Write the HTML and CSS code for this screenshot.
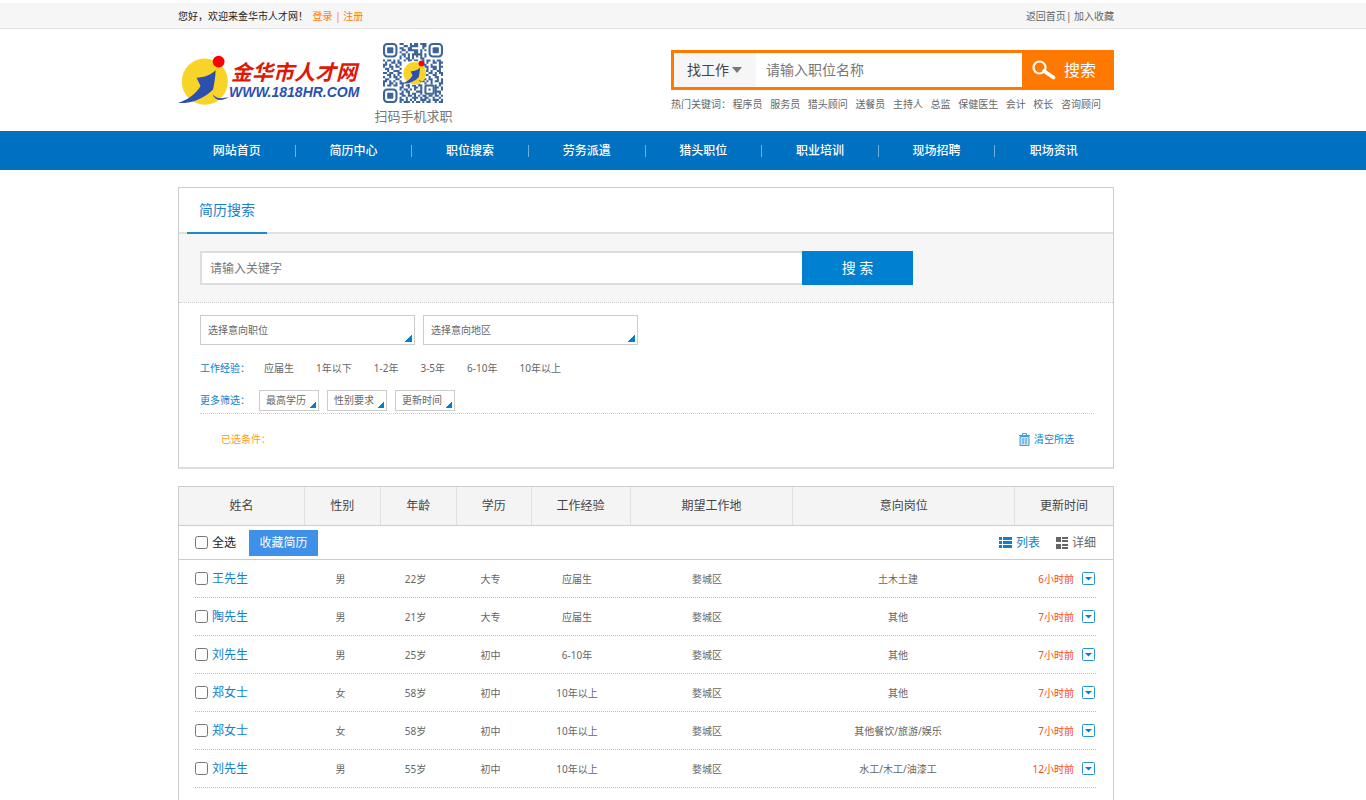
FILE: index.html
```html
<!DOCTYPE html>
<html lang="zh-CN">
<head>
<meta charset="utf-8">
<title>金华市人才网</title>
<link rel="stylesheet" href="styles.css">
</head>
<body>
<svg class="defs" aria-hidden="true">
  <symbol id="mark" viewBox="24 160 154 158">
    <circle cx="105" cy="244" r="70" fill="#f8d428"/>
    <path d="M24 308C50 300 76 284 92 257L80 232C104 231 124 222 138 209C137 232 134 248 130 268C120 278 112 284 104 288C80 302 54 311 24 308Z" fill="#2d50b0"/>
    <path d="M129 283C138 294 152 298 178 291C160 304 136 303 129 283Z" fill="#2d50b0"/>
    <circle cx="147" cy="183" r="18" fill="#f00"/>
  </symbol>
  <symbol id="open" viewBox="0 0 13 13">
    <rect x="0.5" y="0.5" width="12" height="12" rx="1" fill="#fff" stroke="#2a93d8"/>
    <path d="M3 5H10L6.500 8.500Z" fill="#0a7fd0"/>
  </symbol>
</svg>

<div class="topbar">
  <div class="wrap topbar-in">
    <div>您好，欢迎来金华市人才网！ <span class="sign"><a href="#">登录</a> | <a href="#">注册</a></span></div>
    <div class="toplinks"><a href="#">返回首页</a>| <a href="#">加入收藏</a></div>
  </div>
</div>

<header class="head">
  <div class="wrap head-in">
    <a class="logo" href="#">
      <svg class="logo-mark" aria-hidden="true"><use href="#mark"/></svg>
      <span class="logo-text"><span class="logo-cn">金华市人才网</span><span class="logo-en">WWW.1818HR.COM</span></span>
    </a>
    <div class="qr">
      <svg class="qr-code" viewBox="0 0 29 29" aria-hidden="true">
        <g fill="none" stroke="#3d6499">
          <rect x="0.5" y="0.5" width="6" height="6" rx="1.500"/>
          <rect x="22.5" y="0.5" width="6" height="6" rx="1.500"/>
          <rect x="0.5" y="22.5" width="6" height="6" rx="1.500"/>
          <rect x="20.5" y="20.5" width="4" height="4" rx="0.500"/>
          <path id="qr-bits" d=""/>
        </g>
        <g fill="#3d6499">
          <rect x="2" y="2" width="3" height="3" rx="0.500"/>
          <rect x="24" y="2" width="3" height="3" rx="0.500"/>
          <rect x="2" y="24" width="3" height="3" rx="0.500"/>
          <rect x="22" y="22" width="1" height="1"/>
        </g>
        <circle cx="15" cy="14.500" r="5.800" fill="#fff"/>
        <use href="#mark" x="9" y="8" width="12" height="12.500"/>
      </svg>
      <span class="qr-label">扫码手机求职</span>
    </div>
    <div class="find">
      <form class="find-bar">
        <span class="find-type"><select aria-label="搜索类型"><option>找工作</option><option>找人才</option></select></span>
        <input type="text" aria-label="职位名称" placeholder="请输入职位名称">
        <button type="button">
          <svg width="24" height="20" viewBox="0 0 24 20" fill="none" stroke="#fff" aria-hidden="true"><circle cx="7.500" cy="7.500" r="6" stroke-width="2.200"/><path d="M12 11L21.500 17.500" stroke-width="3.600" stroke-linecap="round"/></svg>
          搜索
        </button>
      </form>
      <div class="hot">
        <span>热门关键词：</span><a href="#">程序员</a><a href="#">服务员</a><a href="#">猎头顾问</a><a href="#">送餐员</a><a href="#">主持人</a><a href="#">总监</a><a href="#">保健医生</a><a href="#">会计</a><a href="#">校长</a><a href="#">咨询顾问</a>
      </div>
    </div>
  </div>
</header>

<nav class="nav">
  <div class="wrap nav-in">
    <a href="#">网站首页</a><a href="#">简历中心</a><a href="#">职位搜索</a><a href="#">劳务派遣</a><a href="#">猎头职位</a><a href="#">职业培训</a><a href="#">现场招聘</a><a href="#">职场资讯</a>
  </div>
</nav>

<main class="main">
  <div class="wrap main-in">
    <section class="panel">
      <div class="tabs"><a class="tab" href="#">简历搜索</a></div>
      <form class="keyword">
        <input type="text" aria-label="关键字" placeholder="请输入关键字">
        <button type="button">搜 索</button>
      </form>
      <div class="filters">
        <div class="pickers">
          <select class="pick" aria-label="意向职位"><option>选择意向职位</option></select>
          <select class="pick" aria-label="意向地区"><option>选择意向地区</option></select>
        </div>
        <div class="line">
          <span class="line-label">工作经验：</span>
          <div class="years"><a href="#">应届生</a><a href="#">1年以下</a><a href="#">1-2年</a><a href="#">3-5年</a><a href="#">6-10年</a><a href="#">10年以上</a></div>
        </div>
        <div class="line more">
          <span class="line-label">更多筛选：</span>
          <div class="smalls">
            <select class="pick small" aria-label="最高学历"><option>最高学历</option></select>
            <select class="pick small" aria-label="性别要求"><option>性别要求</option></select>
            <select class="pick small" aria-label="更新时间"><option>更新时间</option></select>
          </div>
        </div>
        <div class="chosen">
          <span>已选条件：</span>
          <a href="#"><svg width="11" height="13" viewBox="0 0 11 13" aria-hidden="true"><path d="M0 2.500H11M3.500 2V0.500H7.500V2" fill="none" stroke="#3d9fdc"/><path d="M1 3.500H10V12.500H1Z" fill="#c4e1f4" stroke="#3d9fdc"/><path d="M4 5V11M7 5V11" stroke="#3d9fdc"/></svg>清空所选</a>
        </div>
      </div>
    </section>

    <table class="list">
      <thead>
        <tr><th>姓名</th><th>性别</th><th>年龄</th><th>学历</th><th>工作经验</th><th>期望工作地</th><th>意向岗位</th><th>更新时间</th></tr>
      </thead>
      <tbody class="tools">
        <tr><td colspan="8">
          <div class="tools-in">
            <label><input type="checkbox">全选</label>
            <button type="button">收藏简历</button>
            <a class="view on" href="#"><svg width="13" height="11" viewBox="0 0 13 11" fill="currentColor" aria-hidden="true"><path d="M0 0H3V3H0ZM4 0H13V3H4ZM0 4H3V7H0ZM4 4H13V7H4ZM0 8H3V11H0ZM4 8H13V11H4Z"/></svg>列表</a>
            <a class="view" href="#"><svg width="12" height="12" viewBox="0 0 12 12" fill="currentColor" aria-hidden="true"><path d="M0 0H5V5H0ZM6 0H12V2H6ZM6 3H12V5H6ZM0 7H5V12H0ZM6 7H12V9H6ZM6 10H12V12H6Z"/></svg>详细</a>
          </div>
        </td></tr>
      </tbody>
      <tbody class="rows">
        <tr><td><label><input type="checkbox" aria-label="选择王先生"></label><a href="#">王先生</a></td><td>男</td><td>22岁</td><td>大专</td><td>应届生</td><td>婺城区</td><td>土木土建</td><td class="time">6小时前<button type="button" aria-label="展开"><svg width="13" height="13"><use href="#open"/></svg></button></td></tr>
        <tr><td><label><input type="checkbox" aria-label="选择陶先生"></label><a href="#">陶先生</a></td><td>男</td><td>21岁</td><td>大专</td><td>应届生</td><td>婺城区</td><td>其他</td><td class="time">7小时前<button type="button" aria-label="展开"><svg width="13" height="13"><use href="#open"/></svg></button></td></tr>
        <tr><td><label><input type="checkbox" aria-label="选择刘先生"></label><a href="#">刘先生</a></td><td>男</td><td>25岁</td><td>初中</td><td>6-10年</td><td>婺城区</td><td>其他</td><td class="time">7小时前<button type="button" aria-label="展开"><svg width="13" height="13"><use href="#open"/></svg></button></td></tr>
        <tr><td><label><input type="checkbox" aria-label="选择郑女士"></label><a href="#">郑女士</a></td><td>女</td><td>58岁</td><td>初中</td><td>10年以上</td><td>婺城区</td><td>其他</td><td class="time">7小时前<button type="button" aria-label="展开"><svg width="13" height="13"><use href="#open"/></svg></button></td></tr>
        <tr><td><label><input type="checkbox" aria-label="选择郑女士"></label><a href="#">郑女士</a></td><td>女</td><td>58岁</td><td>初中</td><td>10年以上</td><td>婺城区</td><td>其他餐饮/旅游/娱乐</td><td class="time">7小时前<button type="button" aria-label="展开"><svg width="13" height="13"><use href="#open"/></svg></button></td></tr>
        <tr><td><label><input type="checkbox" aria-label="选择刘先生"></label><a href="#">刘先生</a></td><td>男</td><td>55岁</td><td>初中</td><td>10年以上</td><td>婺城区</td><td>水工/木工/油漆工</td><td class="time">12小时前<button type="button" aria-label="展开"><svg width="13" height="13"><use href="#open"/></svg></button></td></tr>
      </tbody>
    </table>
  </div>
</main>
<script src="qr.js"></script>
</body>
</html>
```

FILE: styles.css
```css
* { box-sizing: border-box; }
body {
  margin: 0;
  background: #fff;
  color: #666;
  font: 10px/16px "Noto Sans", "Noto Sans CJK SC", sans-serif;
}
a { color: inherit; text-decoration: none; }
button, input, select { font: inherit; color: inherit; margin: 0; border: 0; border-radius: 0; padding: 0; }
button, select { cursor: pointer; }
select { appearance: none; }
svg { display: block; flex: none; }
.defs { width: 0; height: 0; position: absolute; }

.topbar, .head, .nav, .main { padding-right: 74px; }
.wrap { max-width: 936px; margin: 0 auto; }

.topbar { margin-top: 3px; background: #f6f6f6; border-bottom: 1px solid #e2e2e2; }
.topbar-in { display: flex; justify-content: space-between; align-items: center; height: 25px; padding-top: 1px; color: #222; }
.sign { color: #ff7d0a; margin-left: 2px; }
.toplinks { color: #666; }

.head-in { display: flex; align-items: flex-start; height: 102px; }
.logo { display: flex; align-items: flex-start; padding-top: 25px; }
.logo-mark { width: 51px; height: 52px; }
.logo-text { display: flex; flex-direction: column; font-weight: 700; font-style: italic; padding-top: 6px; }
.logo-cn { font-size: 21px; line-height: 24px; color: #e01808; padding-left: 2px; }
.logo-en { font: italic 700 14px/16px "Liberation Sans", sans-serif; color: #2d50b0; }
.qr { display: flex; flex-direction: column; align-items: center; gap: 4px; padding: 14px 0 0 15px; }
.qr-code { width: 60px; height: 60px; }
.qr-label { font-size: 13px; line-height: 18px; color: #777; }
.find { flex: 0 1 443px; margin-left: auto; padding-top: 21px; }
.find-bar { display: flex; height: 40px; border: 3px solid #ff7800; background: #fff; }
.find-type { display: flex; align-items: center; width: 82px; background: #f6f6f6; font-size: 14px; color: #444; padding-left: 13px; }
.find-type select { background: none; width: 45px; height: 34px; }
.find-type::after { content: ""; border: 5px solid transparent; border-top: 6px solid #777; border-bottom: 0; }
.find-bar input { flex: 1; min-width: 0; padding: 0 10px; font-size: 14px; }
.find-bar button { display: flex; align-items: center; gap: 8px; width: 89px; padding-left: 10px; background: #ff7800; color: #fff; font-size: 16px; }
input::placeholder { color: #777; opacity: 1; }
.hot { display: flex; justify-content: space-between; padding: 6px 13px 0 0; white-space: nowrap; }
.hot span { margin-right: -6px; }

.nav { background: #0070c0; }
.nav-in { display: flex; padding: 0 2px 0 1px; color: #fff; font-size: 12px; font-weight: 500; }
.nav-in a { flex: 1; display: flex; align-items: center; height: 39px; }
.nav-in a::before { content: ""; flex: 1; }
.nav-in a::after { content: ""; flex: 1; height: 12px; border-right: 1px solid #6cb0e0; }
.nav-in a:last-child::after { border: 0; }

.main-in { display: flex; flex-direction: column; gap: 17px; padding-top: 17px; }
.panel { border: 1px solid #ccc; border-bottom: 2px solid #ddd; }
.tabs { display: flex; height: 46px; padding-left: 8px; border-bottom: 2px solid #e0e0e0; }
.tab { height: 46px; padding: 0 12px; border-bottom: 2px solid #1a88d4; color: #1a80cc; font-size: 14px; line-height: 44px; }
.keyword { display: flex; padding: 17px 200px 17px 21px; background: #f6f6f6; border-bottom: 1px dotted #ccc; }
.keyword input { flex: 1; min-width: 0; height: 34px; padding: 0 8px; border: 2px solid #ddd; border-right: 0; background: #fff; font-size: 12px; }
.keyword button { width: 111px; height: 34px; background: #0080d0; color: #fff; font-size: 14px; }
.filters { padding: 12px 19px 0 21px; }
.pickers { display: flex; gap: 8px; margin-bottom: 12px; }
.pick {
  width: 215px;
  height: 30px;
  padding: 0 7px;
  border: 1px solid #ccc;
  background: linear-gradient(135deg, transparent 48%, #0080d0 50%) no-repeat right 2px bottom 2px / 7px 7px #fff;
}
.pick.small { width: 60px; height: 21px; padding: 0 0 0 6px; background-size: 6px 6px; }
.line { display: flex; align-items: center; height: 21px; }
.line-label { color: #1080cc; width: 59px; }
.years { display: flex; gap: 22px; padding-left: 5px; }
.smalls { display: flex; gap: 8px; }
.more { height: 36px; padding: 12px 0 3px; border-bottom: 1px dotted #ccc; }
.chosen { display: flex; justify-content: space-between; align-items: center; height: 53px; padding: 0 20px 3px 21px; color: #ff9c10; }
.chosen a { display: flex; align-items: center; gap: 4px; color: #1080cc; }

.list { display: block; min-height: 330px; border: 1px solid #ccc; border-bottom: 0; color: #666; }
.list thead, .list tbody { display: block; }
.list thead tr { display: grid; grid-template-columns: 126fr 76fr 76fr 75fr 99fr 163fr 222fr 98fr; background: #f4f4f4; border-bottom: 1px solid #ccc; }
.list th { padding: 0; border-right: 1px solid #e0e0e0; font-size: 12px; font-weight: 400; line-height: 38px; color: #444; }
.list th:last-child { border-right: 0; }
.tools tr, .tools td { display: block; padding: 0; }
.tools-in { display: flex; align-items: center; height: 34px; padding: 0 17px 0 16px; border-bottom: 1px solid #ccc; font-size: 12px; }
.list label { display: flex; align-items: center; gap: 4px; color: #222; }
.list input { width: 13px; height: 13px; }
.tools-in button { width: 69px; height: 26px; margin: 0 auto 0 13px; background: #3e90e8; color: #fff; }
.view { display: flex; align-items: center; gap: 4px; margin-left: 16px; }
.view.on { color: #1080cc; }
.rows { padding: 0 17px 0 16px; }
.rows tr { display: grid; grid-template-columns: 108fr 75fr 75fr 75fr 98fr 162fr 220fr 88fr; height: 38px; border-bottom: 1px dotted #bbb; }
.rows td { display: flex; align-items: center; justify-content: center; padding: 0; }
.rows td:first-child { justify-content: flex-start; gap: 4px; }
.rows a { color: #1080cc; font-size: 12px; }
.rows .time { justify-content: flex-end; gap: 8px; padding-right: 1px; color: #ff4818; white-space: nowrap; }
.time button { background: none; }
```

FILE: qr.js
```js
// One string per module row; "#" marks a dark module outside the finder squares.
const rows = [
  "........##...#.##.###........",
  "..........##.####..##........",
  "........##..##.....#.........",
  ".........##.#####.#.#........",
  "........#..#...##.#..........",
  ".........##.#.#####.#........",
  "........#.#.#.#.#.#.#........",
  "........#..##.#...##.........",
  "#.##.#.#..#.##.##..#.##.#.##.",
  ".#..##.##..........#.#..##.##",
  "##.#..#.#..........##..#...#.",
  "#..##.##............##.###.##",
  ".##.#...#..........#.#..##.#.",
  "..#..###............##.#..##.",
  "##.##..##..........#..##.#.##",
  "..##.#.#............##..##..#",
  "#..#.##.#..........#..#..##..",
  ".##...##...........##.##..#.#",
  "##.#.#..#..........#.#.#.##.#",
  "#..##.#.##..#.#.##..#..#...##",
  "#.##.##..#.##.##.##......#.#.",
  "........##..#..##.#......##.#",
  "........#.##.#.#..#......#..#",
  ".........#.##...###......###.",
  "........##..#.##..#......#.#.",
  ".........##.##.#.#.##.##.##.#",
  "........#..#..###.#.##..#..#.",
  "........##.#.#.#..###.#.###.#",
  "........#.###.#.##.#.##..#.##"
];
let d = "";
rows.forEach((row, y) => {
  [...row].forEach((c, x) => { if (c === "#") d += `M${x} ${y + 0.5}h1`; });
});
document.getElementById("qr-bits").setAttribute("d", d);
```
